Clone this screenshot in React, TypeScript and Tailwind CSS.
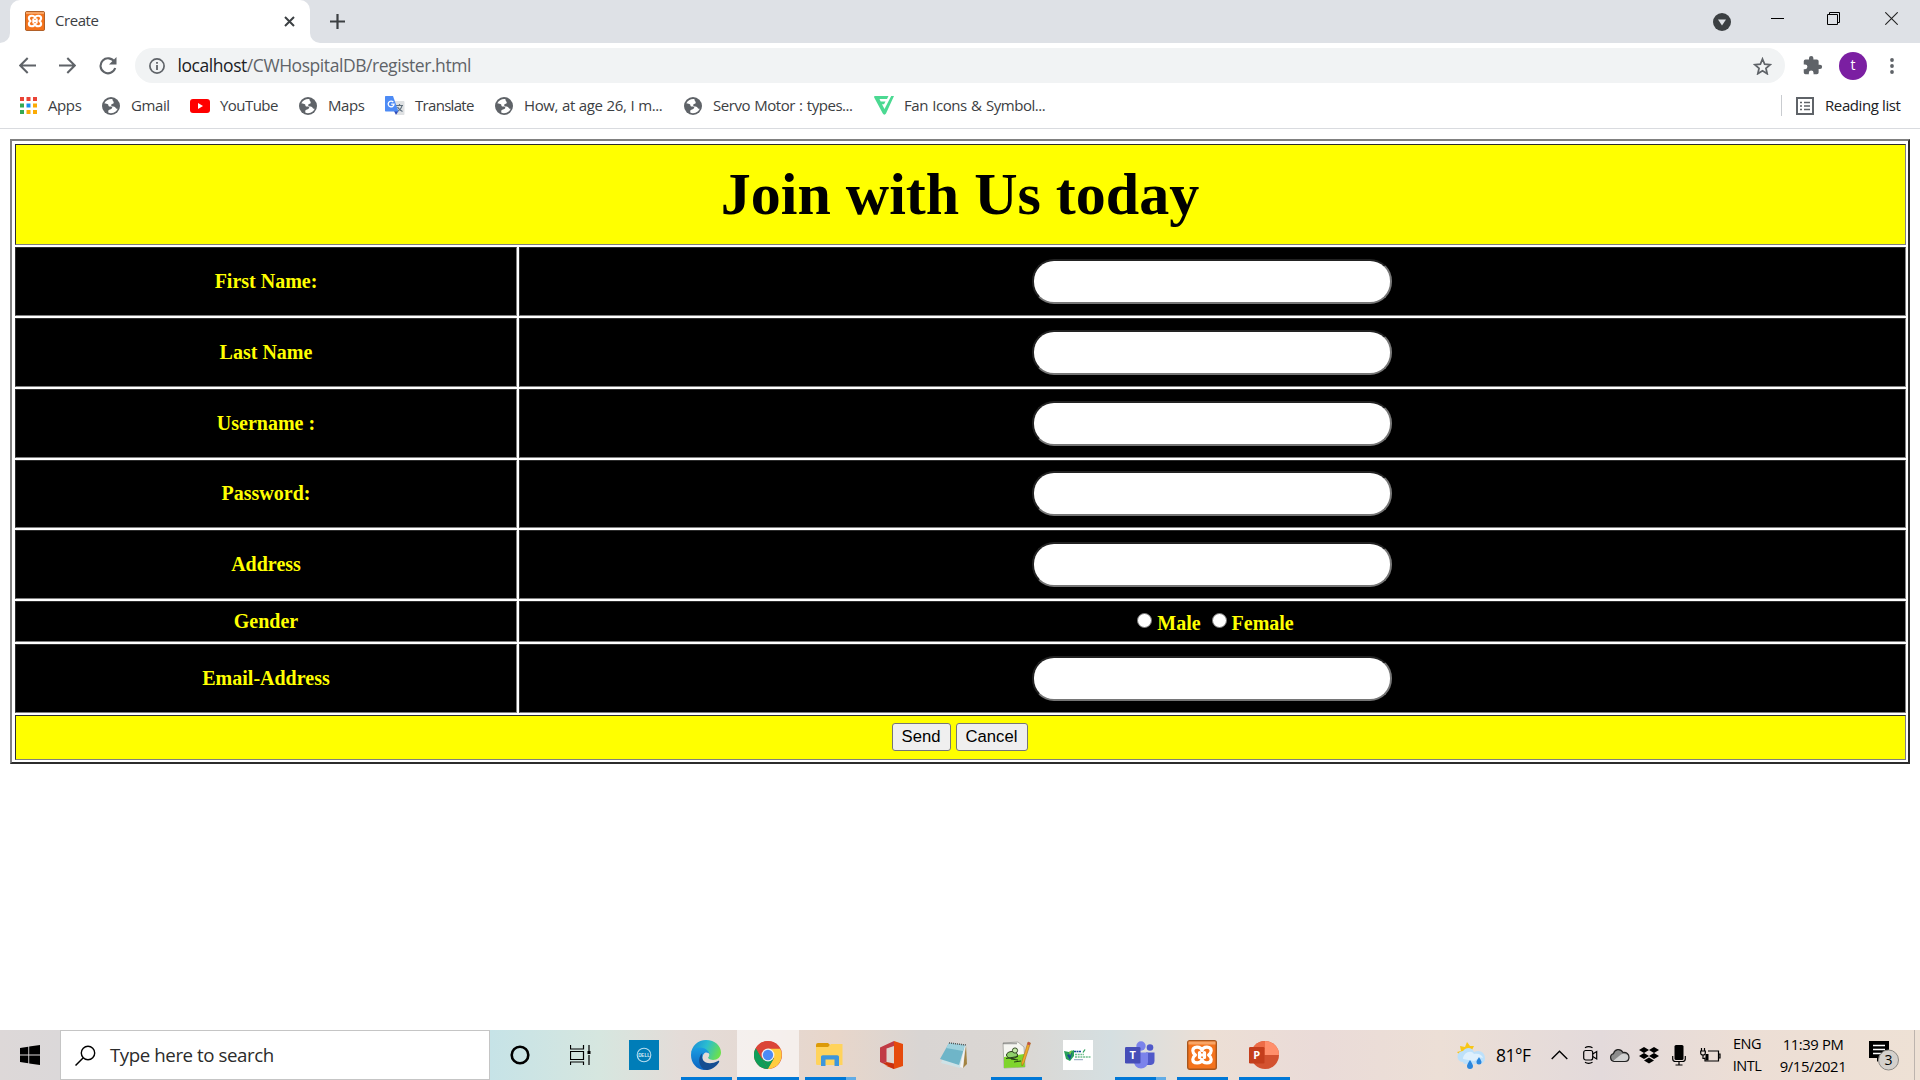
import type { ReactNode } from "react";

const Globe = () => (
  <svg width="18" height="18" viewBox="0 0 18 18">
    <circle cx="9" cy="9" r="9" fill="#5f6368" />
    <path d="M9.800 1.900C6.500 1.700 3.600 3.400 2.400 6.300c1.400.9 2.700.3 3.500 1 .9.8.1 1.800 1.200 2.100 1 .2 2.200-.2 2.900.6.8 1-.3 1.800-1.300 2.200-.9.4-1.900.3-2.300 1.300-.3 1-.1 1.900.1 2.200 1.700.9 5.400.7 7.500-1.400.9-.9 1.300-1.700 1.700-2.500-1.200.1-1.900-.4-2.300-1.200-.5-1.200-1.500-.9-2.700-1.100-1.300-.2-1.900-1.200-1.200-2.200.7-.9 2-.3 2.200-1.400.2-1-.6-1.400-1-2.300-.3-.7-.4-1.200-.2-1.700z" fill="#fff" />
  </svg>
);

const Xampp = ({ size }: { size: number }) => (
  <svg width={size} height={size} viewBox="0 0 30 30">
    <rect x=".7" y=".7" width="28.600" height="28.600" rx="2" fill="#f4731c" stroke="#a8561d" strokeWidth="1.400" />
    <rect x="1.500" y="1.500" width="27" height="3" fill="#f8a566" />
    <path d="M15 10.500C13.800 5.800 5.800 6 5.800 10.800c0 1.900 1.300 3.200 2.600 4.200-1.300 1-2.600 2.300-2.600 4.200 0 4.800 8 5 9.200.3 1.200 4.700 9.200 4.500 9.200-.3 0-1.900-1.300-3.200-2.600-4.200 1.300-1 2.600-2.300 2.600-4.200 0-4.800-8-5-9.200-.3zM12.500 12.500v5M17.500 12.500v5M12.500 15h5" fill="none" stroke="#fff" strokeWidth="3.200" strokeLinecap="round" strokeLinejoin="round" />
  </svg>
);

const AppsGrid = () => (
  <svg width="17" height="17" viewBox="0 0 17 17">
    <path d="M0 0h4v4H0zM6.500 0h4v4h-4zM13 0h4v4h-4z" fill="#ea4335" />
    <path d="M0 6.500h4v4H0zM0 13h4v4H0z" fill="#34a853" />
    <path d="M6.500 6.500h4v4h-4z" fill="#1a8cf0" />
    <path d="M13 6.500h4v4h-4zM6.500 13h4v4h-4zM13 13h4v4h-4z" fill="#fbab05" />
  </svg>
);

const YouTube = () => (
  <svg width="20" height="14" viewBox="0 0 20 14">
    <rect width="20" height="14" rx="3" fill="#f00" />
    <path d="M8 4v6l5-3z" fill="#fff" />
  </svg>
);

const Translate = () => (
  <svg width="20" height="20" viewBox="0 0 20 20">
    <path d="M8 5h10.500c.5 0 1 .5 1 1v12c0 .5-.5 1-1 1H12z" fill="#dfe1e3" />
    <path d="M11 9.500h7M14.500 8v1.500M17 9.500c-.5 3-2.500 4.500-4.500 5.500M12.500 11c1 2 3 3.500 5 4.500" stroke="#5f6f7c" strokeWidth="1.200" fill="none" />
    <path d="M9 15h4.500L11 19z" fill="#3049b5" />
    <path d="M1 0h7l5.500 15.500H1c-.6 0-1-.4-1-1V1c0-.6.4-1 1-1z" fill="#4d8bf5" />
    <path d="M8.300 6.100A2.900 2.900 0 1 0 9 8.200H6.200" stroke="#fff" strokeWidth="1.300" fill="none" />
  </svg>
);

const FanIcon = () => (
  <svg width="20" height="19" viewBox="0 0 20 19">
    <path d="M1 0h13.500L13 3H5.500l1.200 2.400h4.800L10 8.200H8L10.500 13 17.200 0H20L12 17.500c-.8 1.500-2.500 1.500-3.200 0L.2 1.500C-.2.600.2 0 1 0z" fill="#4bd992" />
  </svg>
);

const bookmarks: { label: string; icon: ReactNode; cell: string }[] = [
  { label: "Apps", icon: <AppsGrid />, cell: "w-[83px]" },
  { label: "Gmail", icon: <Globe />, cell: "w-[89px]" },
  { label: "YouTube", icon: <YouTube />, cell: "w-[108px] tracking-[-0.550px]" },
  { label: "Maps", icon: <Globe />, cell: "w-[87px]" },
  { label: "Translate", icon: <Translate />, cell: "w-[109px] tracking-[-0.700px]" },
  { label: "How, at age 26, I m...", icon: <Globe />, cell: "w-[189px] [word-spacing:0.500px]" },
  { label: "Servo Motor : types...", icon: <Globe />, cell: "w-[191px] tracking-[-0.450px] [word-spacing:0.700px]" },
  { label: "Fan Icons & Symbol...", icon: <FanIcon />, cell: "w-[190px] tracking-[-0.450px] [word-spacing:0.900px]" },
];

function Browser() {
  return (
    <header className="font-['Open_Sans',sans-serif] text-[#3c4043]">
      <div className="flex h-[43px] items-start justify-between bg-[#dee1e6]">
        <div className="flex h-full">
          <div className="w-[10px] bg-white">
            <div className="h-full rounded-br-[10px] bg-[#dee1e6]" />
          </div>
          <div className="flex h-full w-[300px] items-center rounded-t-[10px] bg-white pb-[2px] pl-[15px]">
            <Xampp size={20} />
            <span className="ml-[10px] w-[229px] shrink-0 pb-[1px] text-[15px] leading-5 tracking-[-0.450px]">Create</span>
            <svg width="11" height="11" viewBox="0 0 11 11" className="mt-[1px] shrink-0"><path d="M1 1l9 9M10 1l-9 9" stroke="#3c4043" strokeWidth="2" /></svg>
          </div>
          <div className="w-[10px] bg-white">
            <div className="h-full rounded-bl-[10px] bg-[#dee1e6]" />
          </div>
          <svg width="15" height="15" viewBox="0 0 15 15" className="mt-[14px] ml-[10px]"><path d="M7.500 0v15M0 7.500h15" stroke="#3c4043" strokeWidth="2.200" /></svg>
        </div>
        <div className="flex pr-[22px]">
          <svg width="18" height="18" viewBox="0 0 18 18" className="mt-[13px]"><circle cx="9" cy="9" r="9" fill="#3c4043" /><path d="M5 6.500h8L9 12.500z" fill="#dee1e6" /></svg>
          <svg width="13" height="14" viewBox="0 0 13 14" className="mt-[12px] ml-[40px]"><path d="M0 6.500h13" stroke="#000" /></svg>
          <svg width="13" height="13" viewBox="0 0 13 13" className="mt-[12px] ml-[43px]"><path d="M.5 2.500h10v10H.5zM2.500 2.500v-2h10v10h-2" stroke="#000" fill="none" /></svg>
          <svg width="13" height="13" viewBox="0 0 13 13" className="mt-[12px] ml-[45px]"><path d="M.3.3l12.400 12.400M12.700.3L.3 12.700" stroke="#222" strokeWidth="1.100" /></svg>
        </div>
      </div>
      <div className="flex h-[45px] items-center bg-white pl-[19px]">
        <svg width="17" height="17" viewBox="0 0 17 17"><path d="M17 8.500H1.500M8.700 1L1.200 8.500l7.500 7.500" stroke="#5f6368" strokeWidth="2" fill="none" /></svg>
        <svg width="17" height="17" viewBox="0 0 17 17" className="ml-[23px]"><path d="M0 8.500h15.500M8.300 1l7.500 7.500L8.300 16" stroke="#5f6368" strokeWidth="2" fill="none" /></svg>
        <svg width="18" height="18" viewBox="0 0 18 18" className="ml-[23px]"><path d="M15.500 5A7.500 7.500 0 1 0 16.200 11" stroke="#5f6368" strokeWidth="2.100" fill="none" /><path d="M17.500 0v7.500H10z" fill="#5f6368" /></svg>
        <div className="ml-[18px] flex h-[35px] w-[1650px] items-center rounded-full bg-[#f1f3f4] pl-[14px]">
          <svg width="16" height="16" viewBox="0 0 16 16"><circle cx="8" cy="8" r="7.100" fill="none" stroke="#5f6368" strokeWidth="1.700" /><path d="M8 7v5M8 4v1.800" stroke="#5f6368" strokeWidth="1.800" /></svg>
          <span className="ml-[12.500px] w-[1570.500px] text-[17.500px] tracking-[-0.440px] text-[#5f6368]"><span className="text-[#202124]">localhost</span>/CWHospitalDB/register.html</span>
          <svg width="19" height="18" viewBox="0 0 24 23" className="ml-[5px] shrink-0"><path d="M12 2.500l2.700 6.600 7.100.6-5.400 4.700 1.600 7L12 17.700l-6 3.700 1.600-7L2.200 9.700l7.100-.6z" fill="none" stroke="#5f6368" strokeWidth="2.200" /></svg>
        </div>
        <svg width="21" height="21" viewBox="0 0 24 24" className="ml-[17px]"><path d="M20.500 11H19V7a2 2 0 0 0-2-2h-4V3.500a2.500 2.500 0 0 0-5 0V5H4a2 2 0 0 0-2 2v3.800h1.500a2.700 2.700 0 0 1 0 5.400H2V20a2 2 0 0 0 2 2h3.800v-1.500a2.700 2.700 0 0 1 5.400 0V22H17a2 2 0 0 0 2-2v-4h1.500a2.500 2.500 0 0 0 0-5z" fill="#5f6368" /></svg>
        <div className="ml-[16px] flex size-[28px] items-center justify-center rounded-full bg-[#7b1fa2] pb-[2px] text-[14px] text-white">t</div>
        <svg width="4" height="16" viewBox="0 0 4 16" className="ml-[23px]"><circle cx="2" cy="2" r="1.900" fill="#5f6368" /><circle cx="2" cy="8" r="1.900" fill="#5f6368" /><circle cx="2" cy="14" r="1.900" fill="#5f6368" /></svg>
      </div>
      <div className="flex h-[41px] items-center border-b border-[#d9dbdf] bg-white pb-[5px] pl-[18px] text-[15px] leading-5 tracking-[-0.400px]">
        {bookmarks.map((b) => (
          <div key={b.label} className={"flex shrink-0 items-center whitespace-nowrap " + b.cell}>
            <span className="flex w-[20px] justify-center">{b.icon}</span>
            <span className="ml-[10px] pb-[1px]">{b.label}</span>
          </div>
        ))}
        <div className="mr-[18px] ml-auto flex items-center border-l border-[#c9ccd0] pl-[14px] text-[#202124]">
          <svg width="18" height="18" viewBox="0 0 18 18"><path d="M1 1h16v16H1z" fill="none" stroke="#5f6368" strokeWidth="2" /><path d="M4 5.500h2M8 5.500h6M4 9h2M8 9h6M4 12.500h2M8 12.500h6" stroke="#5f6368" strokeWidth="1.600" /></svg>
          <span className="ml-[11px] w-[77px] pb-[1px] whitespace-nowrap">Reading list</span>
        </div>
      </div>
    </header>
  );
}

const cell = "flex items-center justify-center border border-t-[#2c2c2c] border-l-[#2c2c2c] border-r-[#808080] border-b-[#808080]";

const fields: { label: string; row: string }[] = [
  { label: "First Name:", row: "h-[69px]" },
  { label: "Last Name", row: "h-[69px]" },
  { label: "Username :", row: "h-[69px]" },
  { label: "Password:", row: "h-[68px]" },
  { label: "Address", row: "h-[69px]" },
  { label: "Gender", row: "h-[41px]" },
  { label: "Email-Address", row: "h-[69px]" },
];

const Radio = () => <span className="mb-[5px] size-[15px] rounded-full border border-[#767676] bg-white" />;

function RegisterForm() {
  return (
    <main className="mt-[10px] ml-[10px] flex h-[625px] w-[1900px] flex-col gap-[2px] border-2 border-t-[#808080] border-r-[#2c2c2c] border-b-[#2c2c2c] border-l-[#808080] pt-[3px] pr-[2px] pl-[3px] font-['Liberation_Serif',serif] text-[20px] font-bold text-[#ff0]">
      <div className={"h-[101px] bg-[#ff0] pr-[1px] pb-[1px] text-[60px] text-black " + cell}>
        <h1>Join with Us today</h1>
      </div>
      {fields.map((f) => (
        <div key={f.label} className={"flex gap-[2px] " + f.row}>
          <div className={(f.label === "Password:" ? "pb-[2px]" : "pb-[1px]") + " w-[502px] bg-black " + cell}>{f.label}</div>
          <div className={"flex-1 bg-black " + (f.label === "Password:" ? "pb-[2px] " : "") + cell}>
            {f.label === "Gender" ? (
              <div className="ml-[6px] flex items-center pt-[2px]">
                <Radio />
                <span className="ml-[5px]">Male</span>
                <span className="w-[11px]" />
                <Radio />
                <span className="ml-[5px]">Female</span>
              </div>
            ) : (
              <input className="mr-[1px] h-[45px] w-[360px] rounded-[22px] border-2 border-t-[#222] border-r-[#767676] border-b-[#767676] border-l-[#222] bg-white" />
            )}
          </div>
        </div>
      ))}
      <div className={"h-[45px] gap-[5px] bg-[#ff0] pr-[2px] pb-[1px] font-['Liberation_Sans',sans-serif] text-[16.670px] font-normal text-black " + cell}>
        <button className="h-[28px] w-[59px] rounded-[3px] border border-[#767676] bg-[#efefef] leading-5">Send</button>
        <button className="h-[28px] w-[72px] rounded-[3px] border border-[#767676] bg-[#efefef] leading-5">Cancel</button>
      </div>
    </main>
  );
}

const Cortana = () => <svg width="20" height="20" viewBox="0 0 20 20"><circle cx="10" cy="10" r="8.300" fill="none" stroke="#000" strokeWidth="2.600" /></svg>;
const TaskView = () => (
  <svg width="22" height="20" viewBox="0 0 22 20" className="mr-[2px]"><path d="M.5 0v4h13V0M.5 6.500h13v8H.5zM.5 20v-3h13v3M19 0v6M19 10v10" fill="none" stroke="#000" strokeWidth="1.200" /><path d="M17.500 6h3v3h-3z" /></svg>
);
const Dell = () => (
  <svg width="30" height="30" viewBox="0 0 30 30">
    <rect width="30" height="30" fill="#007db8" /><circle cx="15" cy="15" r="6.800" fill="none" stroke="#b7dcee" strokeWidth="1.100" />
    <text x="15" y="16.800" textAnchor="middle" fontSize="4.500" fontWeight="bold" fill="#d8edf6" fontFamily="Liberation Sans, sans-serif">DELL</text>
  </svg>
);
const Edge = () => (
  <svg width="30" height="30" viewBox="0 0 30 30">
    <defs>
      <linearGradient id="edgeTop" x1="0" x2="1" y1=".2" y2=".5"><stop offset="0" stopColor="#1b8ed8" /><stop offset=".5" stopColor="#2bbdd0" /><stop offset="1" stopColor="#6be04e" /></linearGradient>
      <linearGradient id="edgeMid" x1="0" x2="0" y1="0" y2="1"><stop offset="0" stopColor="#1b9de2" /><stop offset="1" stopColor="#0b62c0" /></linearGradient>
    </defs>
    <path d="M0 14C.5 6 7 0 15 0c9 0 15 6 15 12.500 0 4.500-3.500 7.500-8 7.500-3.500 0-5-1.200-5-2.200 0-.8 1.200-1.300 1.200-3.300 0-2.500-3.200-6-9.200-6C4 8.500.5 12 0 14z" fill="url(#edgeTop)" />
    <path d="M0 15C0 9 5 7.500 9 7.500c6 0 9.500 4 9.500 7-1.500-2-6.500-2.500-7 3C11.200 22.500 15 27 21 26c-2 2.500-5 4-8 4C5.500 29.500 0 23 0 15z" fill="url(#edgeMid)" />
    <path d="M11.500 13c-3 8 5 13.500 15.500 8 .8-.4 1.600.2 1 1.200C25.500 26.500 20.500 30 15 30c-7-1.500-9.500-12-3.500-17z" fill="#154d91" />
    <path d="M18.200 14.500c0 2-1.200 2.500-1.200 3.300 0 1 1.500 2.200 5 2.200-3 1.400-8 1-9.200-2.600-.8-2.500.3-5 2.400-5 1.700 0 3 .9 3 2.100z" fill="#e3dad6" />
  </svg>
);
const Chrome = () => (
  <svg width="28" height="28" viewBox="0 0 48 48">
    <circle cx="24" cy="24" r="24" fill="#db4437" />
    <path d="M3.200 12L13.600 30 24 48A24 24 0 0 1 3.200 12z" fill="#0f9d58" />
    <path d="M24 48l10.400-18L24 13h20.800A24 24 0 0 1 24 48z" fill="#ffcd40" />
    <path d="M3.200 12A24 24 0 0 1 44.800 13H24L13.600 30z" fill="#db4437" />
    <path d="M13.600 30L24 48l10.400-18z" fill="#0f9d58" /><path d="M24 48l10.400-18L40 42z" fill="#ffcd40" />
    <circle cx="24" cy="24" r="11" fill="#f1f1f1" /><circle cx="24" cy="24" r="8.800" fill="#4c8bf5" />
  </svg>
);
const Explorer = () => (
  <svg width="28" height="24" viewBox="0 0 28 24">
    <path d="M0 2a2 2 0 0 1 2-2h10l2 2-2 3H0z" fill="#dc9a08" /><path d="M0 4h12l3-3h11.500v21H1.500A1.500 1.500 0 0 1 0 20.500z" fill="#ffd35c" />
    <path d="M5 23v-9c0-1 .7-1.800 1.800-1.800h14.400c1 0 1.800.8 1.800 1.800v9h-4.500v-6.500h-9V23z" fill="#3d96dc" />
  </svg>
);
const Office = () => (
  <svg width="24" height="28" viewBox="0 0 24 28">
    <path d="M14 0l9 3v22l-9 3-9-3.500 9 1V5z" fill="#e64a0c" /><path d="M14 0v5L6.500 7.500V21L3 22.500 0 21V6.500z" fill="#c13b45" /><path d="M3 22.500L6.500 21 14 22.500V28z" fill="#c9300f" />
  </svg>
);
const Notepad = () => (
  <svg width="28" height="27" viewBox="0 0 28 27">
    <path d="M26 3l1 19-4 4z" fill="#a38342" /><path d="M9 1l17 2-6 23-19-5z" fill="#cfe2e6" /><path d="M9 1l16 2-6 20L0 17z" fill="#6fb5c8" /><path d="M9 1l16 2-2 6L6 6z" fill="#9fd2de" /><path d="M25 3l-2 23-3-1z" fill="#f4f4f4" /><path d="M9 1l17 2" stroke="#555" strokeWidth="1.500" strokeDasharray="1 1" />
  </svg>
);
const NotepadPlus = () => (
  <svg width="29" height="28" viewBox="0 0 29 28">
    <path d="M1 2l15-1 6 5 1 20-21 1z" fill="#f5f5f0" stroke="#9a9a94" strokeWidth=".7" /><path d="M2 16l20-3 1 13-21 1z" fill="#7fd52c" /><path d="M1.500 2.500h14" stroke="#555" strokeWidth="1.600" strokeDasharray="1 1" />
    <ellipse cx="10" cy="14" rx="5.500" ry="3.500" fill="#8fd16a" stroke="#283d18" strokeWidth="1" /><circle cx="13" cy="9.500" r="2.600" fill="#c4eaa6" stroke="#283d18" strokeWidth=".9" />
    <path d="M4 17.500l12-2M9 18l7 1M12 21l7-1" stroke="#243d16" strokeWidth="1" /><path d="M26 1l2.500 1L22 22l-2 3-.3-3.500z" fill="#f0a929" stroke="#9b6319" strokeWidth=".5" /><path d="M26 1l2.500 1-.8 2.300-2.500-.9z" fill="#c0504d" />
  </svg>
);
const Leaf = () => (
  <svg width="30" height="30" viewBox="0 0 30 30">
    <rect width="30" height="30" fill="#fff" /><path d="M1 11l5 1 5-2v6l-4 5-4-2z" fill="#28a05a" /><path d="M4 15l5-2-2 7z" fill="#144c93" /><path d="M6 12l3-2-2 6z" fill="#7fc843" />
    <path d="M11 11.500h7" stroke="#144c93" strokeWidth="1.700" strokeDasharray="2 .5" /><path d="M20 12.500l2-3" stroke="#28a05a" strokeWidth="1.300" /><path d="M12 14.500h9M12 17h16" stroke="#6fbf8e" strokeWidth="1.300" strokeDasharray="2 .7" /><path d="M11 19.700h9" stroke="#6d87aa" strokeWidth=".8" />
  </svg>
);
const Teams = () => (
  <svg width="30" height="28" viewBox="0 0 30 28">
    <circle cx="25" cy="6.500" r="3.300" fill="#5059c9" /><path d="M21 11.500h8.500v8c0 3.500-2 4.500-4.500 4.500h-3z" fill="#5059c9" /><circle cx="16" cy="5" r="4.700" fill="#7b83eb" />
    <path d="M9 11.500h14v9c0 4-3 7-7 7s-7-3-7-7z" fill="#7b83eb" /><rect y="6" width="15.500" height="16.500" rx="1.300" fill="#464eb8" />
    <text x="7.700" y="18" textAnchor="middle" fontSize="11" fontWeight="bold" fill="#fff" fontFamily="Open Sans, sans-serif">T</text>
  </svg>
);
const PowerPoint = () => (
  <svg width="30" height="28" viewBox="0 0 30 28">
    <circle cx="16" cy="14" r="14" fill="#d35230" /><path d="M16 0a14 14 0 0 1 14 14H16z" fill="#ff8f6b" /><path d="M16 0v14H2A14 14 0 0 1 16 0z" fill="#ed6c47" />
    <rect y="6" width="15.500" height="16.500" rx="1.300" fill="#c43e1c" /><text x="7.700" y="18" textAnchor="middle" fontSize="11" fontWeight="bold" fill="#fff" fontFamily="Open Sans, sans-serif">P</text>
  </svg>
);

type Task = { name: string; icon: ReactNode; state?: "open" | "active" | "multi" };
const tasks: Task[] = [
  { name: "cortana", icon: <Cortana /> },
  { name: "taskview", icon: <TaskView /> },
  { name: "dell", icon: <Dell /> },
  { name: "edge", icon: <Edge />, state: "open" },
  { name: "chrome", icon: <Chrome />, state: "active" },
  { name: "explorer", icon: <Explorer />, state: "multi" },
  { name: "office", icon: <Office /> },
  { name: "notepad", icon: <Notepad /> },
  { name: "notepadpp", icon: <NotepadPlus />, state: "open" },
  { name: "leaf", icon: <Leaf /> },
  { name: "teams", icon: <Teams />, state: "multi" },
  { name: "xampp", icon: <Xampp size={30} />, state: "open" },
  { name: "powerpoint", icon: <PowerPoint />, state: "open" },
];

function TaskItem({ icon, state }: Task) {
  return (
    <div className={"flex h-full w-[62px] shrink-0 flex-col items-center " + (state === "active" ? "bg-white/60" : "")}>
      <div className="flex h-[47px] items-center pt-[3px]">{icon}</div>
      {state === "open" && <div className="h-[3px] w-[51px] bg-[#0078d7]" />}
      {state === "active" && <div className="h-[3px] w-full bg-[#0078d7]" />}
      {state === "multi" && (
        <div className="flex h-[3px] w-[51px]"><div className="w-[41px] bg-[#0078d7]" /><div className="w-[10px] bg-[#62ace6]" /></div>
      )}
    </div>
  );
}

function Taskbar() {
  return (
    <footer className="flex h-[50px] w-full items-center bg-[linear-gradient(90deg,#ddd8d8_0px,#dbd8d9_60px,#c6e3e7_490px,#d6e6df_600px,#e4dcd8_680px,#e5d8d1_780px,#e8d6ca_835px,#d9d5d3_920px,#dbd7d3_1020px,#d5dfe1_1110px,#ecdfd5_1210px,#eadbd8_1320px,#ecdfd6_1440px,#e3dadb_1600px,#ecded5_1740px,#eee1d5_1920px)] font-['Open_Sans',sans-serif] text-black">
      <div className="flex w-[60px] justify-center">
        <svg width="20" height="20" viewBox="0 0 20 20"><path d="M0 2.900L8.300 1.700v7.800H0zM9.200 1.600L20 0v9.500H9.200zM0 10.400h8.300v7.900L0 17.100zM9.200 10.400H20V20L9.200 18.400z" /></svg>
      </div>
      <div className="flex h-full w-[430px] items-center border border-[#c5c5c5] bg-white pl-[14px]">
        <svg width="21" height="21" viewBox="0 0 21 21"><circle cx="13" cy="8" r="6.700" fill="none" stroke="#000" strokeWidth="1.400" /><path d="M8.300 12.700L.5 20.500" stroke="#000" strokeWidth="1.500" /></svg>
        <span className="ml-[14px] text-[18.700px] tracking-[-0.430px] text-[#2b2b2b]">Type here to search</span>
      </div>
      <div className="-ml-px flex h-full">{tasks.map((t) => <TaskItem key={t.name} {...t} />)}</div>
      <svg width="29" height="27" viewBox="0 0 29 27" className="ml-[162px]">
        <path d="M10 0l3 4 4 0-2 4 1 5-7 3-4-1-5-5 4-1-1-5 5 1z" fill="#f8c616" /><path d="M6 20a5.500 5.500 0 0 1 0-11c3-4 9-4 11 1 6-3 11 1 11 6 0 4-3 6-6 6H7z" fill="#bde0fa" /><path d="M6 17c0-6 8-10 11-5 5-1 8 1 9 4-4-2-6 2-9 3z" fill="#dff0fd" />
        <path d="M13 18c2.500 4 3 5 3 6a3 3 0 0 1-6 0c0-1 1-3 3-6zM22 15c2 3.500 2.500 4 2.500 5a2.500 2.500 0 0 1-5 0c0-1 .5-1.500 2.500-5z" fill="#2a86dd" />
      </svg>
      <span className="ml-[10px] w-[36px] text-[17.500px] tracking-[-0.500px] whitespace-nowrap">81°F</span>
      <svg width="17" height="10" viewBox="0 0 17 10" className="ml-[19px]"><path d="M.7 9L8.500 1.200 16.300 9" fill="none" stroke="#000" strokeWidth="1.400" /></svg>
      <svg width="15" height="18" viewBox="0 0 15 18" className="ml-[15px]"><rect x=".7" y="4.500" width="9" height="9.500" rx="2" fill="none" stroke="#000" strokeWidth="1.200" /><path d="M9.700 8l4-2.500v7.500l-4-2.500M2 1.800Q5.500-.5 9.500 1.800M2 16.300q3.500 2.200 7.500 0" fill="none" stroke="#000" strokeWidth="1.200" /></svg>
      <svg width="21" height="15" viewBox="0 0 21 15" className="ml-[11px]"><path d="M5 13.500a4 4 0 0 1-.5-7.800C5.500 1.500 11-.5 14 4.500c3.500-.5 6 1.500 6 4.700 0 2.500-1.500 4.300-4 4.300z" fill="#8c8c8c" /><path d="M4 13l8-6.500c4-1 7.500 0 7.500 2.500 0 2-1.500 4-4 4z" fill="#d2d2d2" /><path d="M5 13.500a4 4 0 0 1-.5-7.800C5.500 1.500 11-.5 14 4.500c3.500-.5 6 1.500 6 4.700 0 2.500-1.500 4.300-4 4.300z" fill="none" stroke="#222" strokeWidth="1.200" /></svg>
      <svg width="20" height="17" viewBox="0 0 20 17" className="ml-[9px]"><path d="M5 0l5 3-5 3-5-3zM15 0l5 3-5 3-5-3zM5 6l5 3-5 3-5-3zM15 6l5 3-5 3-5-3zM10 10.500l5 3-5 3-5-3z" /></svg>
      <svg width="14" height="21" viewBox="0 0 14 21" className="ml-[13px]"><rect x="2.500" width="9" height="15" rx="1.500" /><path d="M.7 11v3q0 2.500 3 2.500h6.600q3 0 3-2.500v-3M7 16.500V20M3.500 20h7" fill="none" stroke="#000" strokeWidth="1.200" /></svg>
      <svg width="21" height="15" viewBox="0 0 21 15" className="ml-[14px]"><path d="M5 9.500V13h13.500V3H8M18.500 6H20v4h-1.500M1.500 0v3M4.500 0v3M.7 3h4.600v2Q5.300 7 3 7T.7 5zM3 7v3.500h2" fill="none" stroke="#000" strokeWidth="1.200" /><path d="M5.500 6h3v6.500h-3z" /></svg>
      <div className="ml-[10px] flex w-[32px] flex-col items-center text-[14.500px] leading-[22px] tracking-[-0.500px]"><span>ENG</span><span>INTL</span></div>
      <div className="ml-[14px] flex w-[72px] flex-col items-center text-[14.800px] leading-[22px] tracking-[-0.400px] whitespace-nowrap"><span>11:39 PM</span><span>9/15/2021</span></div>
      <svg width="31" height="31" viewBox="0 0 31 31" className="mt-[1px] ml-[20px]">
        <path d="M0 1h20v17h-8l-4 4v-4H0z" /><path d="M4 5.500h12M4 9.500h12M4 13.500h8" stroke="#fff" strokeWidth="1.300" /><circle cx="19.500" cy="20" r="10" fill="#d4d0cc" stroke="#8b8884" strokeWidth="1" />
        <text x="19.500" y="25" textAnchor="middle" fontSize="14" fill="#000" fontFamily="Open Sans, sans-serif">3</text>
      </svg>
      <div className="mr-[5px] ml-auto h-full w-px bg-[#bdb4ae]" />
    </footer>
  );
}

export default function App() {
  return (
    <div className="flex h-[1080px] w-[1920px] flex-col overflow-hidden bg-white">
      <Browser />
      <RegisterForm />
      <div className="flex-1" />
      <Taskbar />
    </div>
  );
}
